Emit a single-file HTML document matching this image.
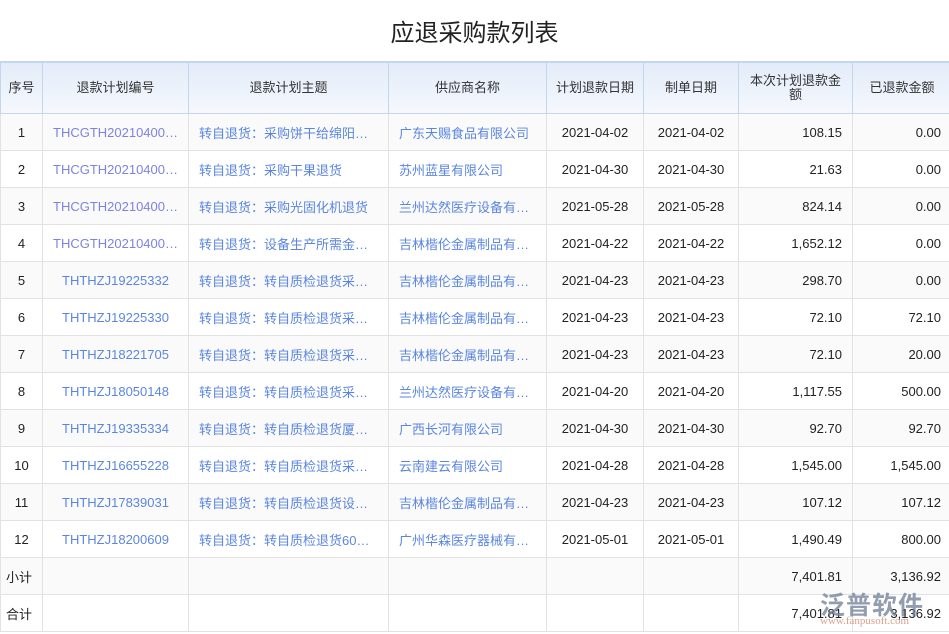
<!DOCTYPE html>
<html><head><meta charset="utf-8"><style>
body{margin:0;width:949px;height:634px;background:#fff;font-family:"Liberation Sans","Noto Sans CJK SC",sans-serif;overflow:hidden;position:relative}
h1{margin:0;position:absolute;top:17px;left:0;width:949px;text-align:center;font-size:24px;font-weight:normal;color:#222;line-height:34px}
table{position:absolute;top:61px;left:0;border-collapse:collapse;table-layout:fixed;width:951px;font-size:13px}
th{height:50px;padding:0;font-weight:normal;color:#333;background:linear-gradient(#e3ecf9,#f5f8fd);border:1px solid #c3d6ee;border-top:2px solid #c3d6ee;line-height:14px}
td{height:36px;padding:0 10px;border:1px solid #e2e2e2;color:#222;white-space:nowrap;overflow:hidden;text-overflow:ellipsis}
tr:nth-child(even) td{background:#fafafa}
td:nth-child(1){text-align:center;padding:0}
.c{text-align:center}.r{text-align:right}
.a{color:#7d83e0;text-align:center}
.b{color:#5b86e0}
.wm{position:absolute;left:820px;top:586px;font-size:25px;color:rgba(110,125,150,.75);font-weight:bold;letter-spacing:1px}
.wm2{position:absolute;left:820px;top:615px;font-size:11px;color:rgba(200,120,90,.7);font-family:"Liberation Serif",serif}
</style></head><body>
<h1>应退采购款列表</h1>
<table>
<colgroup><col style="width:42px"><col style="width:146px"><col style="width:200px"><col style="width:158px"><col style="width:97px"><col style="width:95px"><col style="width:114px"><col style="width:99px"></colgroup>
<tr><th>序号</th><th>退款计划编号</th><th>退款计划主题</th><th>供应商名称</th><th>计划退款日期</th><th>制单日期</th><th>本次计划退款金<br>额</th><th>已退款金额</th></tr>
<tr><td>1</td><td class="a">THCGTH20210400…</td><td class="b">转自退货：采购饼干给绵阳…</td><td class="b">广东天赐食品有限公司</td><td class="c">2021-04-02</td><td class="c">2021-04-02</td><td class="r">108.15</td><td class="r">0.00</td></tr>
<tr><td>2</td><td class="a">THCGTH20210400…</td><td class="b">转自退货：采购干果退货</td><td class="b">苏州蓝星有限公司</td><td class="c">2021-04-30</td><td class="c">2021-04-30</td><td class="r">21.63</td><td class="r">0.00</td></tr>
<tr><td>3</td><td class="a">THCGTH20210400…</td><td class="b">转自退货：采购光固化机退货</td><td class="b">兰州达然医疗设备有…</td><td class="c">2021-05-28</td><td class="c">2021-05-28</td><td class="r">824.14</td><td class="r">0.00</td></tr>
<tr><td>4</td><td class="a">THCGTH20210400…</td><td class="b">转自退货：设备生产所需金…</td><td class="b">吉林楷伦金属制品有…</td><td class="c">2021-04-22</td><td class="c">2021-04-22</td><td class="r">1,652.12</td><td class="r">0.00</td></tr>
<tr><td>5</td><td class="b c">THTHZJ19225332</td><td class="b">转自退货：转自质检退货采…</td><td class="b">吉林楷伦金属制品有…</td><td class="c">2021-04-23</td><td class="c">2021-04-23</td><td class="r">298.70</td><td class="r">0.00</td></tr>
<tr><td>6</td><td class="b c">THTHZJ19225330</td><td class="b">转自退货：转自质检退货采…</td><td class="b">吉林楷伦金属制品有…</td><td class="c">2021-04-23</td><td class="c">2021-04-23</td><td class="r">72.10</td><td class="r">72.10</td></tr>
<tr><td>7</td><td class="b c">THTHZJ18221705</td><td class="b">转自退货：转自质检退货采…</td><td class="b">吉林楷伦金属制品有…</td><td class="c">2021-04-23</td><td class="c">2021-04-23</td><td class="r">72.10</td><td class="r">20.00</td></tr>
<tr><td>8</td><td class="b c">THTHZJ18050148</td><td class="b">转自退货：转自质检退货采…</td><td class="b">兰州达然医疗设备有…</td><td class="c">2021-04-20</td><td class="c">2021-04-20</td><td class="r">1,117.55</td><td class="r">500.00</td></tr>
<tr><td>9</td><td class="b c">THTHZJ19335334</td><td class="b">转自退货：转自质检退货厦…</td><td class="b">广西长河有限公司</td><td class="c">2021-04-30</td><td class="c">2021-04-30</td><td class="r">92.70</td><td class="r">92.70</td></tr>
<tr><td>10</td><td class="b c">THTHZJ16655228</td><td class="b">转自退货：转自质检退货采…</td><td class="b">云南建云有限公司</td><td class="c">2021-04-28</td><td class="c">2021-04-28</td><td class="r">1,545.00</td><td class="r">1,545.00</td></tr>
<tr><td>11</td><td class="b c">THTHZJ17839031</td><td class="b">转自退货：转自质检退货设…</td><td class="b">吉林楷伦金属制品有…</td><td class="c">2021-04-23</td><td class="c">2021-04-23</td><td class="r">107.12</td><td class="r">107.12</td></tr>
<tr><td>12</td><td class="b c">THTHZJ18200609</td><td class="b">转自退货：转自质检退货60…</td><td class="b">广州华森医疗器械有…</td><td class="c">2021-05-01</td><td class="c">2021-05-01</td><td class="r">1,490.49</td><td class="r">800.00</td></tr>
<tr><td style="text-align:left;padding-left:5px">小计</td><td></td><td></td><td></td><td></td><td></td><td class="r">7,401.81</td><td class="r">3,136.92</td></tr>
<tr><td style="text-align:left;padding-left:5px">合计</td><td></td><td></td><td></td><td></td><td></td><td class="r">7,401.81</td><td class="r">3,136.92</td></tr>
</table>
<div class="wm">泛普软件</div>
<div class="wm2">www.fanpusoft.com</div>
</body></html>
